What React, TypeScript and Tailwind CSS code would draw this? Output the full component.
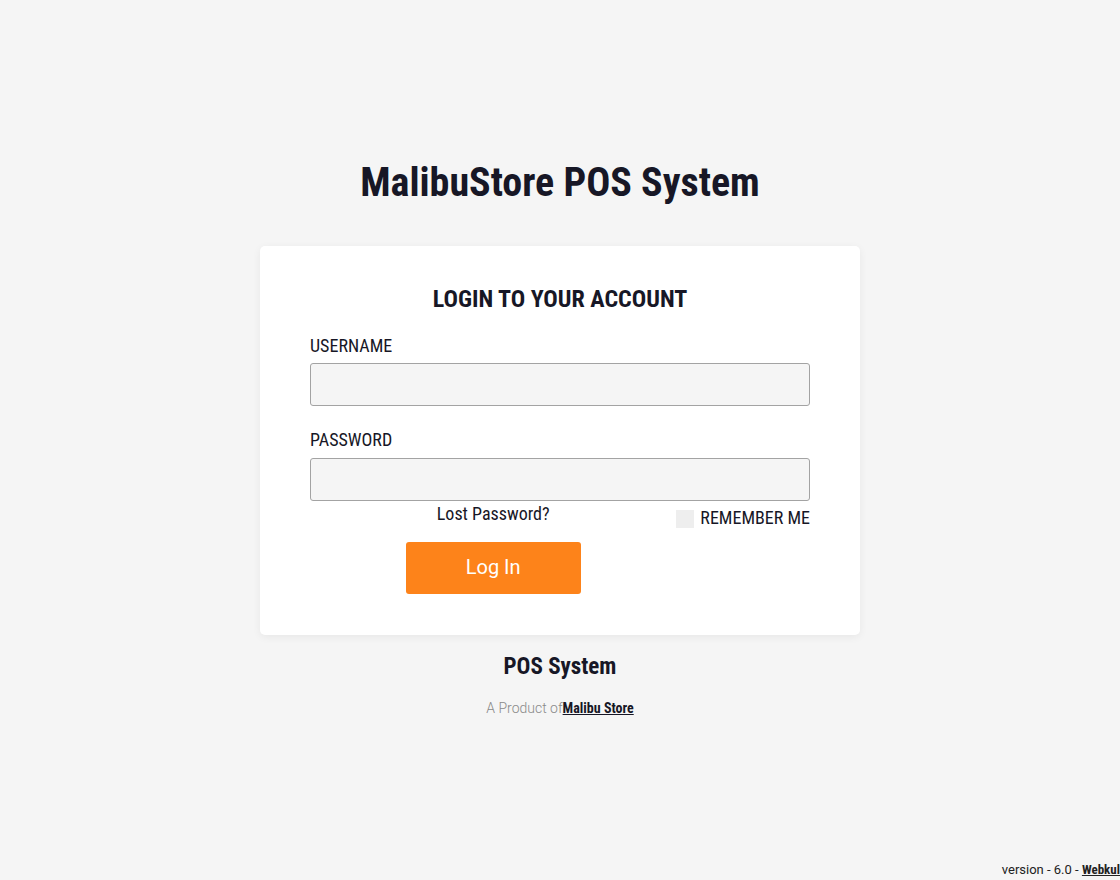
export default function App() {
  return (
    <div className="min-h-screen bg-[#f5f5f5] font-['Roboto_Condensed','Roboto',sans-serif] text-[#171726] flex flex-col items-center relative">
      <h1 className="mt-[159px] text-[40px] leading-[48px] font-bold">MalibuStore POS System</h1>

      <div className="mt-[39px] w-[600px] bg-white rounded-[5px] shadow-[0_2px_8px_rgba(0,0,0,0.06)] px-[50px] pt-[39px] pb-[41px]">
        <h2 className="text-center text-[24px] leading-[28px] font-bold">LOGIN TO YOUR ACCOUNT</h2>

        <form className="mt-[21px] flex flex-col" onSubmit={(e) => e.preventDefault()}>
          <label className="text-[18px] leading-[24px]">USERNAME</label>
          <input
            type="text"
            className="mt-[5px] h-[43px] w-full bg-[#f5f5f5] border border-[#a3a3a3] rounded-[3px] px-3 outline-none"
          />

          <label className="mt-[22px] text-[18px] leading-[24px]">PASSWORD</label>
          <input
            type="password"
            className="mt-[6px] h-[43px] w-full bg-[#f5f5f5] border border-[#a3a3a3] rounded-[3px] px-3 outline-none"
          />

          <div className="flex">
            <div className="flex-1 flex flex-col items-center">
              <a className="mt-[1px] text-[18px] leading-[24px] cursor-pointer">Lost Password?</a>
              <button
                type="submit"
                className="mt-[16px] w-[175px] h-[52px] bg-[#fd831a] text-white rounded-[3px] text-[20px] leading-[26px] pb-[2px] font-['Roboto',sans-serif]"
              >
                Log In
              </button>
            </div>
            <label className="mt-[7px] flex items-start gap-[6px] h-fit">
              <span className="w-[18px] h-[18px] bg-[#eeeeee] mt-[2px]" />
              <span className="text-[18px] leading-[20px]">REMEMBER ME</span>
            </label>
          </div>
        </form>
      </div>

      <div className="mt-[18px] text-[23px] leading-[28px] font-bold">POS System</div>
      <div className="mt-[17px] text-[14px] leading-[20px] text-[#8a8a8a] font-['Roboto',sans-serif] font-light">
        A Product of
        <a className="font-['Roboto_Condensed','Roboto',sans-serif] font-bold text-[#171726] underline">Malibu Store</a>
      </div>

      <div className="absolute right-0 bottom-[1px] text-[13px] leading-[18px] font-['Roboto',sans-serif] text-[#222]">
        version - 6.0 - <a className="font-['Roboto_Condensed','Roboto',sans-serif] font-bold underline">Webkul</a>
      </div>
    </div>
  );
}
